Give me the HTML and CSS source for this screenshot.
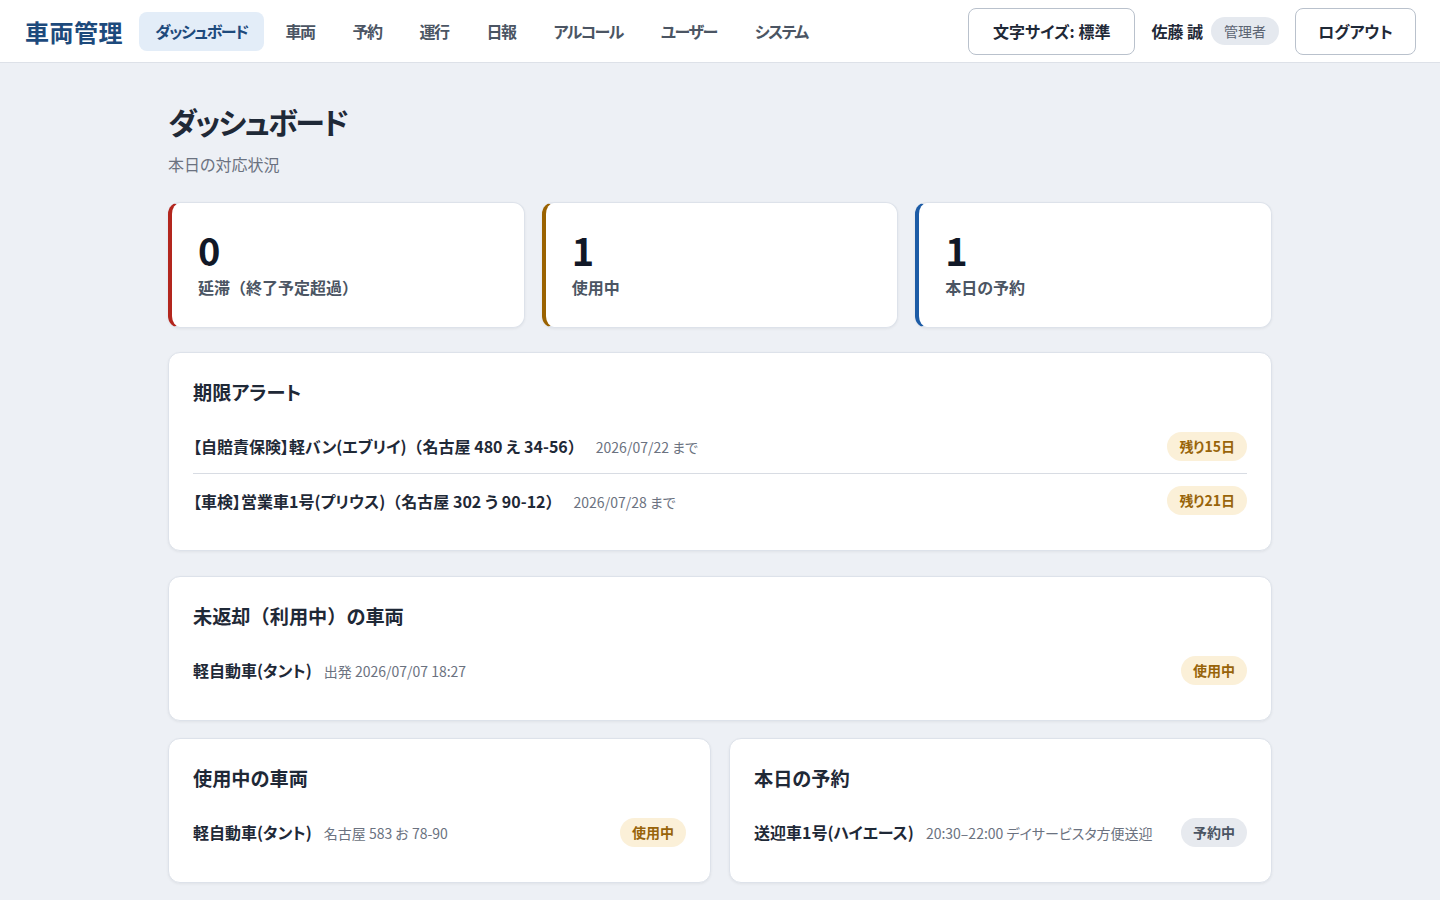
FILE: index.html
```html
<!DOCTYPE html>
<html lang="ja">

<head>
  <meta charset="UTF-8">
  <meta name="viewport" content="width=device-width, initial-scale=1.0">
  <title>ダッシュボード - 車両管理</title>
  <link rel="stylesheet" href="styles.css">
</head>

<body>
  <header class="topbar">
    <div class="brand">車両管理</div>
    <nav class="nav">
      <a href="#" class="nav-item active">ダッシュボード</a>
      <a href="#" class="nav-item">車両</a>
      <a href="#" class="nav-item">予約</a>
      <a href="#" class="nav-item">運行</a>
      <a href="#" class="nav-item">日報</a>
      <a href="#" class="nav-item">アルコール</a>
      <a href="#" class="nav-item">ユーザー</a>
      <a href="#" class="nav-item">システム</a>
    </nav>
    <div class="user-area">
      <button class="outline-button font-size-button">文字サイズ: 標準</button>
      <span class="user-name">佐藤 誠</span>
      <span class="role-tag">管理者</span>
      <button class="outline-button logout-button">ログアウト</button>
    </div>
  </header>

  <main class="container">
    <h1 class="page-title">ダッシュボード</h1>
    <p class="page-subtitle">本日の対応状況</p>

    <div class="stats">
      <div class="stat-card overdue">
        <div class="stat-number">0</div>
        <div class="stat-label">延滞<span class="paren">（</span>終了予定超過<span class="paren">）</span></div>
      </div>
      <div class="stat-card in-use">
        <div class="stat-number">1</div>
        <div class="stat-label">使用中</div>
      </div>
      <div class="stat-card today">
        <div class="stat-number">1</div>
        <div class="stat-label">本日の予約</div>
      </div>
    </div>

    <section class="card">
      <h3>期限アラート</h3>
      <ul class="list">
        <li class="list-row">
          <div><span class="row-title">【自賠責保険】軽バン(エブリイ)<span class="paren">（</span>名古屋 480 え 34-56<span class="paren">）</span></span><span class="row-meta">2026/07/22 まで</span></div>
          <span class="badge warn">残り15日</span>
        </li>
        <li class="list-row">
          <div><span class="row-title">【車検】営業車1号(プリウス)<span class="paren">（</span>名古屋 302 う 90-12<span class="paren">）</span></span><span class="row-meta">2026/07/28 まで</span></div>
          <span class="badge warn">残り21日</span>
        </li>
      </ul>
    </section>

    <section class="card">
      <h3>未返却<span class="paren">（</span>利用中<span class="paren">）</span>の車両</h3>
      <ul class="list">
        <li class="list-row">
          <div><span class="row-title">軽自動車(タント)</span><span class="row-meta">出発 2026/07/07 18:27</span></div>
          <span class="badge warn">使用中</span>
        </li>
      </ul>
    </section>

    <div class="two-col">
      <section class="card">
        <h3>使用中の車両</h3>
        <ul class="list">
          <li class="list-row">
            <div><span class="row-title">軽自動車(タント)</span><span class="row-meta">名古屋 583 お 78-90</span></div>
            <span class="badge warn">使用中</span>
          </li>
        </ul>
      </section>
      <section class="card">
        <h3>本日の予約</h3>
        <ul class="list">
          <li class="list-row">
            <div><span class="row-title">送迎車1号(ハイエース)</span><span class="row-meta">20:30–22:00 デイサービスタ方便送迎</span></div>
            <span class="badge muted">予約中</span>
          </li>
        </ul>
      </section>
    </div>
  </main>
</body>

</html>
```

FILE: styles.css
```css
body {
  font-family: "Noto Sans CJK JP", "Noto Sans", sans-serif;
  font-feature-settings: "palt";
  background-color: #edf0f5;
  color: #1f2937;
  margin: 0;
}

.paren {
  font-feature-settings: normal;
}

.topbar {
  display: flex;
  align-items: center;
  height: 63px;
  padding: 0 24px 0 25px;
  background-color: white;
  border-bottom: 1px solid #dde1e8;
  box-sizing: border-box;
}

.brand {
  font-size: 24px;
  font-weight: 700;
  color: #1d4a7c;
  letter-spacing: 0.5px;
  margin-right: 16px;
}

.nav {
  display: flex;
  gap: 6px;
}

.nav-item {
  display: block;
  padding: 0 16px;
  line-height: 39px;
  border-radius: 8px;
  font-size: 16px;
  font-weight: 600;
  letter-spacing: -1.5px;
  color: #4b5563;
  text-decoration: none;
}

.nav-item.active {
  background-color: #e3edf8;
  color: #1d4a7c;
}

.user-area {
  display: flex;
  align-items: center;
  margin-left: auto;
}

.outline-button {
  font-family: inherit;
  font-feature-settings: "palt";
  height: 47px;
  padding: 0 24px;
  background-color: white;
  border: 1px solid #b9c1cc;
  border-radius: 8px;
  font-size: 16px;
  font-weight: 700;
  color: #1f2937;
  cursor: pointer;
}

.font-size-button {
  margin-right: 16px;
}

.logout-button {
  padding: 0 22px;
}

.user-name {
  font-size: 16px;
  font-weight: 700;
  margin-right: 8px;
}

.role-tag {
  background-color: #e5e9ef;
  color: #5b6472;
  font-size: 14px;
  padding: 0 13px;
  line-height: 28px;
  border-radius: 14px;
  margin-right: 16px;
}

.container {
  max-width: 1104px;
  margin: 0 auto;
  padding: 36px 0 40px;
}

.page-title {
  font-size: 30px;
  font-weight: 700;
  letter-spacing: -2px;
  margin: 0;
  line-height: 44px;
}

.page-subtitle {
  margin: 9px 0 0;
  font-size: 16px;
  color: #6b7280;
  line-height: 24px;
}

.stats {
  display: grid;
  grid-template-columns: repeat(3, 1fr);
  gap: 17px;
  margin: 26px 0 24px;
}

.stat-card {
  background-color: white;
  border: 1px solid #dde2ea;
  border-left: 4px solid;
  border-radius: 12px;
  padding: 25px 26px 28px;
  box-shadow: 0 1px 3px rgba(0, 0, 0, 0.06);
}

.stat-card.overdue {
  border-left-color: #b3261e;
}

.stat-card.in-use {
  border-left-color: #9a6200;
}

.stat-card.today {
  border-left-color: #1d5ca6;
}

.stat-number {
  font-size: 38px;
  font-weight: 700;
  line-height: 44px;
  color: #111827;
}

.stat-label {
  margin-top: 3px;
  font-size: 16px;
  font-weight: 600;
  color: #4b5563;
  line-height: 24px;
}

.card {
  background-color: white;
  border: 1px solid #dde2ea;
  border-radius: 12px;
  padding: 23px 24px 23px;
  margin-bottom: 25px;
  box-shadow: 0 1px 3px rgba(0, 0, 0, 0.06);
}

.card h3 {
  margin: 0 0 11px;
  font-size: 19.2px;
  font-weight: 600;
  line-height: 32px;
}

.list {
  list-style: none;
  margin: 0;
  padding: 0;
}

.list-row {
  display: flex;
  align-items: center;
  justify-content: space-between;
  height: 54px;
  box-sizing: border-box;
}

.list-row + .list-row {
  border-top: 1px solid #d8dce3;
}

.row-title {
  font-size: 16px;
  font-weight: 600;
  color: #1f2937;
  margin-right: 12px;
}

.row-meta {
  font-size: 14px;
  color: #6b7280;
}

.badge {
  font-size: 14px;
  font-weight: 600;
  padding: 0 12px;
  line-height: 29px;
  border-radius: 15px;
}

.badge.warn {
  background-color: #fbf0d8;
  color: #98640a;
}

.badge.muted {
  background-color: #e7eaef;
  color: #4b5563;
}

.two-col {
  display: grid;
  grid-template-columns: 1fr 1fr;
  gap: 18px;
  margin-top: -8px;
}
```
